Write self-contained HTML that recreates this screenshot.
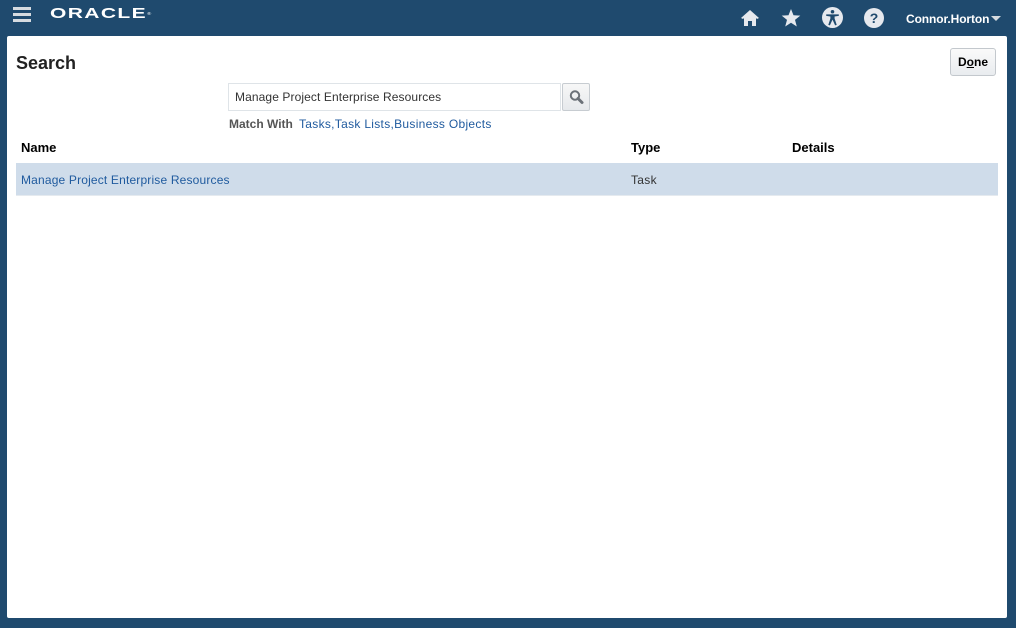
<!DOCTYPE html>
<html><head><meta charset="utf-8"><style>
body{margin:0;width:1016px;height:628px;background:#1f4a6e;font-family:"Liberation Sans",Arial,sans-serif;position:relative;overflow:hidden}
.abs{position:absolute}
.panel{left:7px;top:36px;width:1000px;height:582px;background:#fff;border-radius:2px}
.user{color:#fff;font-weight:bold;font-size:12px;top:12px;left:906px;letter-spacing:-0.1px}
a{color:#1f5a9e;text-decoration:none}
</style></head><body>
<div class="abs" style="left:13px;top:7px">
 <div style="width:18px;height:3px;background:#d6dbe0;margin-bottom:3px"></div>
 <div style="width:18px;height:3px;background:#d6dbe0;margin-bottom:3px"></div>
 <div style="width:18px;height:3px;background:#d6dbe0"></div>
</div>
<div class="abs" style="left:50px;top:6px;color:#fff;font-size:15px;line-height:15px;font-weight:bold;letter-spacing:1px;transform:scaleX(1.4);transform-origin:left">ORACLE<span style="font-size:4px;vertical-align:top;font-weight:normal">®</span></div>
<svg class="abs" style="left:740px;top:8px" width="20" height="20" viewBox="0 0 20 20"><path d="M10 2 L1 10 L3 11 L4 10 V18 H8 V13 H12 V18 H16 V10 L17 11 L19 10 Z" fill="#e6e9ee"/></svg>
<svg class="abs" style="left:781px;top:8px" width="20" height="20" viewBox="0 0 20 20"><path d="M10 1 L12.5 7.3 L19.3 7.6 L14 11.9 L15.8 18.5 L10 14.8 L4.2 18.5 L6 11.9 L0.7 7.6 L7.5 7.3Z" fill="#e6e9ee"/></svg>
<svg class="abs" style="left:822px;top:7px" width="21" height="21" viewBox="0 0 20 20"><circle cx="10" cy="10" r="10" fill="#e6e9ee"/><circle cx="10" cy="4.5" r="1.7" fill="#1f4a6e"/><path d="M4 7 L16 7 L16 8.5 L12 9 L12 11 L14 17 L12.5 17.5 L10 12 L7.5 17.5 L6 17 L8 11 L8 9 L4 8.5Z" fill="#1f4a6e"/></svg>
<svg class="abs" style="left:864px;top:8px" width="20" height="20" viewBox="0 0 20 20"><circle cx="10" cy="10" r="10" fill="#e6e9ee"/><text x="10" y="15" text-anchor="middle" font-size="14" font-weight="bold" fill="#1f4a6e" font-family="Liberation Sans">?</text></svg>
<div class="abs user">Connor.Horton</div>
<div class="abs" style="left:991px;top:16px;width:0;height:0;border-left:5px solid transparent;border-right:5px solid transparent;border-top:5px solid #d6dbe0"></div>
<div class="abs panel"></div>
<div class="abs" style="left:16px;top:53px;font-size:18px;font-weight:bold;color:#222">Search</div>
<div class="abs" style="left:950px;top:48px;width:44px;height:26px;border:1px solid #c3c8cd;border-radius:3px;background:linear-gradient(#fafafa,#e9ecef);font-size:12px;font-weight:bold;text-align:center;line-height:26px;color:#000">D<u>o</u>ne</div>
<div class="abs" style="left:228px;top:83px;height:26px;border:1px solid #dfe4e8;font-size:12px;line-height:27px;padding-left:6px;color:#333;width:325px;letter-spacing:0.1px">Manage Project Enterprise Resources</div>
<div class="abs" style="left:562px;top:83px;width:26px;height:26px;border:1px solid #c7ccd1;border-radius:2px;background:linear-gradient(#f7f7f7,#e6e9ec)">
 <svg width="26" height="26" viewBox="0 0 26 26"><circle cx="12" cy="11.5" r="4.2" fill="none" stroke="#6b7178" stroke-width="2"/><path d="M15 14.5 L19 18.5" stroke="#6b7178" stroke-width="3" stroke-linecap="round"/></svg>
</div>
<div class="abs" style="left:229px;top:117px;font-size:12px;color:#555;font-weight:bold">Match With</div>
<div class="abs" style="left:299px;top:117px;font-size:12px;letter-spacing:0.3px"><a>Tasks,Task Lists,Business Objects</a></div>
<div class="abs" style="left:21px;top:140px;font-size:13px;font-weight:bold;color:#000">Name</div>
<div class="abs" style="left:631px;top:140px;font-size:13px;font-weight:bold;color:#000">Type</div>
<div class="abs" style="left:792px;top:140px;font-size:13px;font-weight:bold;color:#000">Details</div>
<div class="abs" style="left:16px;top:163px;width:982px;height:32px;background:#cfdcea;border-bottom:1px solid #e5eaef"></div>
<div class="abs" style="left:21px;top:173px;font-size:12px;letter-spacing:0.17px"><a>Manage Project Enterprise Resources</a></div>
<div class="abs" style="left:631px;top:173px;font-size:12px;color:#333;letter-spacing:0.3px">Task</div>
</body></html>
